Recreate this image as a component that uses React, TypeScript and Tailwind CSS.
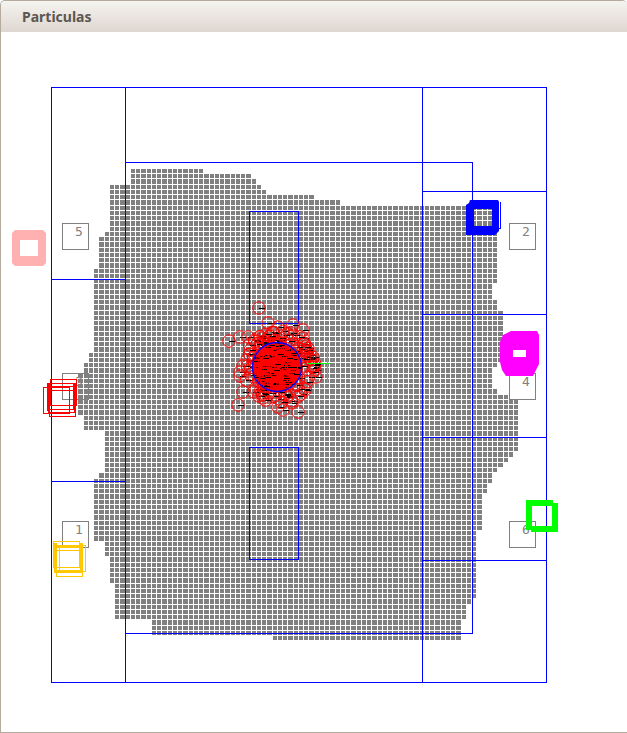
const outline: [number, number][] = [
  [132, 169], [187, 169], [205, 171], [230, 173], [240, 174], [255, 177], [258, 185], [265, 192],
  [280, 194], [308, 195], [320, 199], [337, 201], [343, 203], [407, 204], [430, 205], [467, 206],
  [499, 206], [499, 280], [494, 283], [493, 297], [499, 300], [501, 313], [501, 360], [495, 367],
  [494, 390], [510, 397], [518, 400], [518, 450], [512, 458], [498, 468], [493, 478], [488, 488],
  [484, 495], [484, 522], [479, 530], [479, 590], [473, 598], [468, 605], [468, 620], [459, 622],
  [459, 641], [407, 641], [403, 638], [298, 639], [247, 637], [230, 637], [153, 634], [153, 621],
  [139, 621], [138, 618], [117, 617], [115, 583], [111, 580], [111, 558], [104, 553], [104, 543],
  [95, 542], [95, 482], [101, 475], [104, 458], [106, 445], [105, 434], [81, 429], [79, 373],
  [89, 357], [95, 348], [93, 337], [93, 283], [99, 253], [99, 237], [107, 230], [108, 183], [132, 183],
];

const fieldLines = [
  "M51.5 87.5H546.5V682.5H51.5Z",
  "M125.5 87.5V682.5M422.5 87.5V682.5",
  "M51.5 279.5H125.5M51.5 481.5H125.5",
  "M422.5 191.5H546.5M422.5 314.5H546.5M422.5 437.5H546.5M422.5 560.5H546.5",
  "M125.5 162.5H472.5V633.5H125.5Z",
  "M249.5 211.5H298.5V323.5H249.5Z",
  "M249.5 447.5H298.5V559.5H249.5Z",
];

const beacons = [
  { n: "5", x: 62, y: 223 },
  { n: "3", x: 62, y: 373 },
  { n: "1", x: 62, y: 521 },
  { n: "2", x: 509, y: 223 },
  { n: "4", x: 509, y: 373 },
  { n: "6", x: 509, y: 521 },
];

const redBoxes = [[43, 387], [50, 379], [47, 383], [49, 390], [48, 386]];
const yellowBoxes = [[53, 541], [59, 545], [56, 550]];

// a few strays at the edge of the cloud
const strays: [number, number][] = [
  [259, 308], [229, 341], [240, 337], [248, 337], [260, 337], [268, 323], [278, 327], [293, 325],
  [303, 330], [303, 338], [310, 355], [315, 370], [316, 377], [240, 372], [240, 376], [243, 392],
  [238, 405], [298, 412], [278, 407], [263, 398], [292, 403], [283, 410], [247, 360], [243, 366],
];

function inside(x: number, y: number) {
  let hit = false;
  for (let i = 0, j = outline.length - 1; i < outline.length; j = i++) {
    const [xi, yi] = outline[i];
    const [xj, yj] = outline[j];
    if (yi > y !== yj > y && x < ((xj - xi) * (y - yi)) / (yj - yi) + xi) hit = !hit;
  }
  return hit;
}

// 5.25px pitch with a 1px white gap, so cells come out 4 or 5px wide
function cellsPath() {
  const pitch = 5.25;
  let d = "";
  for (let r = 0; r < 96; r++) {
    const y0 = Math.round(163.5 + r * pitch);
    const y1 = Math.round(163.5 + (r + 1) * pitch) - 1;
    for (let c = 0; c < 90; c++) {
      const x0 = Math.round(52 + c * pitch);
      const x1 = Math.round(52 + (c + 1) * pitch) - 1;
      if (inside((x0 + x1) / 2, (y0 + y1) / 2)) d += `M${x0} ${y0}H${x1}V${y1}H${x0}Z`;
    }
  }
  return d;
}

function particles() {
  let seed = 7;
  const rand = () => {
    seed = (seed * 16807) % 2147483647;
    return seed / 2147483647;
  };
  const list: [number, number][] = [...strays];
  for (let i = 0; i < 170; i++) {
    const a = rand() * Math.PI * 2;
    const r = Math.sqrt(rand()) * 37;
    list.push([278 + Math.cos(a) * r, 367 + Math.sin(a) * r]);
  }
  return list;
}

function Field() {
  const dots = particles();
  return (
    <svg width="626" height="700" viewBox="1 32 626 700" className="block">
      <path d={cellsPath()} fill="#808080" shapeRendering="crispEdges" />

      {beacons.map((b) => (
        <g key={b.n}>
          <rect x={b.x + 0.5} y={b.y + 0.5} width="26" height="26" fill="none" stroke="#808080" />
          <text x={b.x + 13} y={b.y + 13} fontSize="13" fill="#808080" className="font-['DejaVu_Sans_Mono',monospace]">
            {b.n}
          </text>
        </g>
      ))}

      {fieldLines.map((d) => (
        <path key={d} d={d} fill="none" stroke="#0000ff" strokeWidth="1" shapeRendering="crispEdges" />
      ))}

      {/* pink robot */}
      <path
        fillRule="evenodd"
        fill="#ffb0b0"
        d="M15 230H43L46 233V263L43 266H15L12 263V233ZM20 240V256H38V240Z"
      />

      {/* blue robot */}
      <path
        fillRule="evenodd"
        fill="#0000ff"
        d="M470 200H498L499 202V231L497 233L495 235H466V205L469 203ZM474 209V226H492V209Z"
      />
      <path d="M499.5 202.5H500.5V228.5H497" fill="none" stroke="#0000ff" shapeRendering="crispEdges" />

      {/* magenta robot */}
      <path
        fillRule="evenodd"
        fill="#ff00ff"
        d="M511 331H537L539 335V364L535 372L533 376H506L502 370L500 362V342L503 335ZM513 350V357H526V350Z"
      />

      {/* green robot */}
      <path
        fillRule="evenodd"
        fill="#00ff00"
        d="M526 500H553V503H558V532H531V530H526ZM532 506V526H552V506Z"
      />

      {redBoxes.map(([x, y]) => (
        <rect key={`${x}-${y}`} x={x + 0.5} y={y + 0.5} width="26" height="26" fill="none" stroke="#ff0000" strokeWidth="1" shapeRendering="crispEdges" />
      ))}
      <path d="M47 383H50V411H47ZM74 383H77V406H74Z" fill="#ff0000" shapeRendering="crispEdges" />

      {yellowBoxes.map(([x, y]) => (
        <rect key={`${x}-${y}`} x={x + 0.5} y={y + 0.5} width="26" height="26" fill="none" stroke="#ffc800" strokeWidth="1" shapeRendering="crispEdges" />
      ))}
      <path
        fillRule="evenodd"
        fill="#ffc800"
        shapeRendering="crispEdges"
        d="M54 543H57V545H80V543H83V573H54ZM57 548V570H80V548Z"
      />

      {/* particle cloud */}
      <circle cx="277" cy="367" r="24" fill="#ff0000" />
      {dots.map(([x, y], i) => (
        <g key={i}>
          <circle cx={x} cy={y} r="6.2" fill="none" stroke="#ff0000" strokeWidth="1" />
          <path d={`M${Math.round(x)} ${Math.round(y) + 0.5}h6`} stroke="#000000" strokeWidth="1" shapeRendering="crispEdges" />
        </g>
      ))}
      <circle cx="277" cy="367" r="24.5" fill="none" stroke="#0000ff" strokeWidth="1.3" />

      {/* target cross */}
      <path d="M327.5 343V383M307 363.5H330" stroke="#00ff00" strokeWidth="1" shapeRendering="crispEdges" />
    </svg>
  );
}

export default function App() {
  return (
    <div className="flex h-[733px] w-[627px] flex-col overflow-hidden rounded-t-[5px] border-t border-b border-l border-[#b4aa9e] bg-white">
      <div className="flex h-[31px] shrink-0 items-center bg-gradient-to-b from-[#f5f4f0] to-[#dfd6d0] pl-[21px]">
        <span className="font-['Noto_Sans',sans-serif] text-[14px] font-bold text-[#5c5750]">Particulas</span>
      </div>
      <Field />
    </div>
  );
}
